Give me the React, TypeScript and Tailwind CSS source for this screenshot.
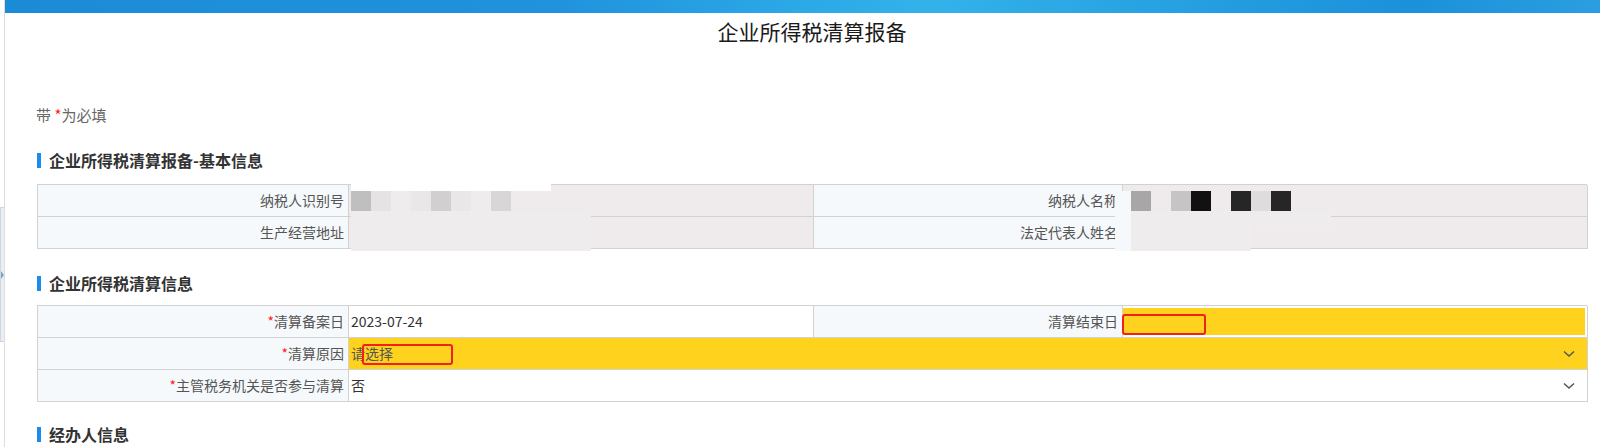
import React from "react";

function Heading({ children, className }: { children: React.ReactNode; className: string }) {
  return (
    <div className={"flex items-center ml-[32px] " + className}>
      <div className="w-[4px] h-[15px] bg-[#1a8cf0]" />
      <div className="ml-[8px] text-[16px] leading-[22px] font-bold text-[#333]">{children}</div>
    </div>
  );
}

function Chevron() {
  return (
    <svg width="12" height="8" viewBox="0 0 12 8" fill="none">
      <path d="M1 1.5l5 4.5 5-4.5" stroke="#555" strokeWidth="1.5" />
    </svg>
  );
}

function Req() {
  return <span className="text-[#ff2020]">*</span>;
}

export default function App() {
  const lbl =
    "flex items-center justify-end pr-[4px] bg-[#f5f9fb] border-r border-b border-[#d2d2d2] text-[#555] whitespace-nowrap overflow-hidden";
  const ro = "bg-[#efebec] border-r border-b border-[#d2d2d2]";
  const val = "flex items-center pl-[2px] bg-white border-r border-b border-[#d2d2d2] text-[#333]";

  return (
    <div className="flex w-[1600px] h-[447px] overflow-hidden bg-white font-['Noto_Sans_CJK_SC',sans-serif] text-[14px]">
      {/* left frame edge */}
      <div className="w-[5px] shrink-0 border-r border-[#dedede] flex flex-col">
        <div className="mt-[207px] h-[135px] w-[4px] bg-[#e9eff4] border-y border-l border-[#cfd8e0] flex items-center">
          <div className="w-0 h-0 border-y-[4px] border-y-transparent border-l-[3px] border-l-[#7fa2bf]" />
        </div>
      </div>

      <div className="flex-1 flex flex-col">
        {/* banner */}
        <div className="h-[13px] bg-[linear-gradient(90deg,#1c8bd6_0%,#2093dc_35%,#2aa6e6_48%,#33b2ea_58%,#27a2e2_72%,#1b91da_88%,#2a9ee0_100%)]" />

        {/* title */}
        <div className="mt-[4px] pl-[19px] text-center text-[21px] leading-[28px] text-[#1a1a1a]">企业所得税清算报备</div>

        <div className="mt-[60px] ml-[31px] text-[15px] leading-[20px] text-[#666]">
          带 <Req />为必填
        </div>

        <Heading className="mt-[24px]">企业所得税清算报备-基本信息</Heading>

        {/* table 1 */}
        <div className="relative mt-[13px] ml-[32px] w-[1550px] grid grid-cols-[311px_465px_309px_465px] auto-rows-[32px] border-l border-t border-[#d2d2d2]">
          <div className={lbl}>纳税人识别号</div>
          <div className={ro} />
          <div className={lbl}>纳税人名称</div>
          <div className={ro} />
          <div className={lbl}>生产经营地址</div>
          <div className={ro} />
          <div className={lbl}>法定代表人姓名</div>
          <div className={ro} />

          {/* redactions over value 1 */}
          <div className="absolute left-[313px] top-[-9px] w-[200px] h-[15px] bg-white" />
          <div className="absolute left-[313px] top-[6px] h-[20px] flex">
            <div className="w-[20px] bg-[#bfbfbf]" />
            <div className="w-[20px] bg-[#e6e3e4]" />
            <div className="w-[20px] bg-[#efeced]" />
            <div className="w-[20px] bg-[#eae7e8]" />
            <div className="w-[20px] bg-[#d1cfd0]" />
            <div className="w-[20px] bg-[#eae7e8]" />
            <div className="w-[20px] bg-[#efeced]" />
            <div className="w-[20px] bg-[#d9d6d7]" />
          </div>
          <div className="absolute left-[313px] top-[26px] w-[240px] h-[40px] bg-[#efecee]" />

          {/* redactions over value 2 */}
          <div className="absolute left-[1077px] top-[6px] w-[16px] h-[60px] bg-[#f6f9fb]" />
          <div className="absolute left-[1093px] top-[6px] h-[20px] flex">
            <div className="w-[20px] bg-[#a8a6a7]" />
            <div className="w-[20px] bg-[#efebec]" />
            <div className="w-[20px] bg-[#c6c4c5]" />
            <div className="w-[20px] bg-[#111111]" />
            <div className="w-[20px] bg-[#efebec]" />
            <div className="w-[20px] bg-[#262626]" />
            <div className="w-[20px] bg-[#dedcdd]" />
            <div className="w-[20px] bg-[#262626]" />
          </div>
          <div className="absolute left-[1093px] top-[26px] w-[120px] h-[40px] bg-[#efecee]" />
          <div className="absolute left-[1213px] top-[26px] w-[80px] h-[15px] bg-[#efecee]" />
        </div>

        <Heading className="mt-[23px]">企业所得税清算信息</Heading>

        {/* table 2 */}
        <div className="mt-[11px] ml-[32px] w-[1550px] grid grid-cols-[311px_465px_309px_465px] auto-rows-[32px] border-l border-t border-[#d2d2d2]">
          <div className={lbl}>
            <Req />清算备案日
          </div>
          <div className={val}>2023-07-24</div>
          <div className={lbl}>清算结束日</div>
          <div className="bg-white border-r border-b border-[#d2d2d2] pt-[2px] pb-[2px] pr-[2px]">
            <div className="relative h-full bg-[#fed21d]">
              <div className="absolute left-[-1px] top-[6px] w-[84px] h-[21px] border-2 border-[#f0201a] rounded-[3px]" />
            </div>
          </div>

          <div className={lbl}>
            <Req />清算原因
          </div>
          <div className="col-span-3 relative flex items-center justify-between pl-[2px] pr-[12px] bg-[#fed21d] border-r border-b border-[#d2d2d2] text-[#555]">
            <span>请选择</span>
            <Chevron />
            <div className="absolute left-[13px] top-[6px] w-[91px] h-[21px] border-2 border-[#f0201a] rounded-[3px]" />
          </div>

          <div className={lbl}>
            <Req />主管税务机关是否参与清算
          </div>
          <div className="col-span-3 flex items-center justify-between pl-[2px] pr-[12px] bg-white border-r border-b border-[#d2d2d2] text-[#333]">
            <span>否</span>
            <Chevron />
          </div>
        </div>

        <Heading className="mt-[21px]">经办人信息</Heading>
      </div>
    </div>
  );
}
